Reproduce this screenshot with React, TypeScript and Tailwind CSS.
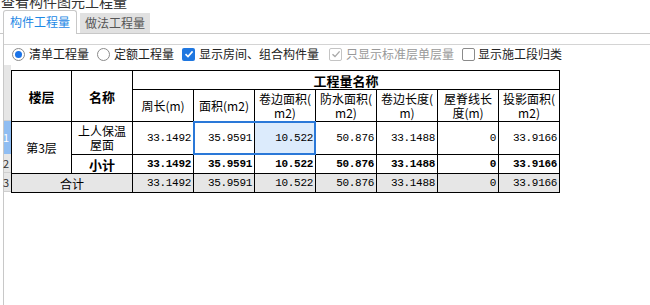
import { ReactNode } from "react";

const cjk = "font-['Noto_Sans_CJK_SC','Noto_Sans',sans-serif]";
const mono = "font-['Liberation_Mono','Noto_Sans_CJK_SC',monospace] text-[11px] tracking-[-0.3px]";

// 数值列
const headers: ReactNode[] = [
  "周长(m)",
  "面积(m2)",
  <>卷边面积(<br />m2)</>,
  <>防水面积(<br />m2)</>,
  <>卷边长度(<br />m)</>,
  <>屋脊线长<br />度(m)</>,
  <>投影面积(<br />m2)</>,
];

const values = ["33.1492", "35.9591", "10.522", "50.876", "33.1488", "0", "33.9166"];

const Radio = ({ checked }: { checked?: boolean }) => (
  <span className="w-[13px] h-[13px] rounded-full border border-[#8a8a8a] bg-white flex items-center justify-center">
    {checked && <span className="w-[7px] h-[7px] rounded-full bg-[#1a73e8]" />}
  </span>
);

const Check = ({ state }: { state: "on" | "off" | "disabled" }) => {
  if (state === "on")
    return (
      <span className="w-[13px] h-[13px] rounded-[2px] bg-[#1f77e0] flex items-center justify-center">
        <svg width="10" height="10" viewBox="0 0 10 10">
          <path d="M1.5 5.2 L4 7.6 L8.6 2.4" fill="none" stroke="#fff" strokeWidth="1.6" />
        </svg>
      </span>
    );
  return (
    <span
      className={`w-[13px] h-[13px] rounded-[2px] border bg-white flex items-center justify-center ${
        state === "disabled" ? "border-[#c4c4c4]" : "border-[#8a8a8a]"
      }`}
    >
      {state === "disabled" && (
        <svg width="10" height="10" viewBox="0 0 10 10">
          <path d="M1.5 5.2 L4 7.6 L8.6 2.4" fill="none" stroke="#a8a8a8" strokeWidth="1.4" />
        </svg>
      )}
    </span>
  );
};

const td = "border border-black px-[2px] text-right";

export default function App() {
  return (
    <div className={`w-[650px] h-[305px] bg-white overflow-hidden text-black ${cjk}`}>
      {/* 标题，顶部被截掉 */}
      <div className="h-[11px] overflow-hidden">
        <div className="-mt-[8px] pl-[1px] text-[14px] leading-[18px] text-[#333]">查看构件图元工程量</div>
      </div>

      {/* 页签 */}
      <div className="flex items-end h-[23px] pl-[3px] border-b border-[#c8c8c8]">
        <div className="h-[24px] -mb-px px-[6px] border border-b-0 border-[#c8c8c8] rounded-t-[3px] bg-white text-[12px] leading-[22px] text-[#1e88e5]">
          构件工程量
        </div>
        <div className="ml-[3px] h-[20px] px-[5px] bg-[#e1e1e1] text-[12px] leading-[20px] text-[#555]">做法工程量</div>
      </div>

      <div className="ml-[3px] border-l border-[#c8c8c8] h-[271px]">
        <div className="h-[11px] border-b border-[#d4d4d4]" />

        {/* 选项 */}
        <div className="flex items-center h-[18px] pl-[8px] text-[12px] leading-[16px] text-[#222]">
          <Radio checked />
          <span className="ml-[4px]">清单工程量</span>
          <span className="ml-[8px]"><Radio /></span>
          <span className="ml-[4px]">定额工程量</span>
          <span className="ml-[8px]"><Check state="on" /></span>
          <span className="ml-[4px]">显示房间、组合构件量</span>
          <span className="ml-[10px]"><Check state="disabled" /></span>
          <span className="ml-[4px] text-[#999]">只显示标准层单层量</span>
          <span className="ml-[8px]"><Check state="off" /></span>
          <span className="ml-[3px]">显示施工段归类</span>
        </div>

        {/* 表格 */}
        <div className="flex mt-[2px]">
          <div className="w-[7px] flex flex-col text-[11px] leading-none">
            <div className="h-[5px] bg-[#e6e6e6]" />
            <div className="h-[51px] bg-[#e6e6e6] border-b border-[#cfcfcf]" />
            <div className="h-[33px] bg-[#8fbdf2] text-white flex items-center -indent-[1px]">1</div>
            <div className="h-[19px] bg-[#e6e6e6] border-b border-[#cfcfcf] flex items-center -indent-[1px] text-[#333]">2</div>
            <div className="h-[19px] bg-[#e6e6e6] border-b border-[#cfcfcf] flex items-center -indent-[1px] text-[#333]">3</div>
          </div>
          <div className="relative mt-[5px]">
            <table className="border-collapse table-fixed w-[549px] text-[12px] leading-[15px]">
              <colgroup>
                <col className="w-[60px]" />
                <col className="w-[61px]" />
                {headers.map((_, i) => (
                  <col key={i} className="w-[61px]" />
                ))}
              </colgroup>
              <tbody>
                <tr className="h-[19px]">
                  <td rowSpan={2} className="border border-black text-center font-bold text-[13px]">楼层</td>
                  <td rowSpan={2} className="border border-black text-center font-bold text-[13px]">名称</td>
                  <td colSpan={7} className="border border-black text-center font-bold text-[13px] leading-[17px]">
                    工程量名称
                  </td>
                </tr>
                <tr className="h-[32px]">
                  {headers.map((h, i) => (
                    <td key={i} className="border border-black text-center align-middle leading-[14px] whitespace-nowrap">
                      {h}
                    </td>
                  ))}
                </tr>
                <tr className="h-[33px]">
                  <td rowSpan={2} className="border border-black text-center">第3层</td>
                  <td className="border border-black text-center leading-[14px]">
                    上人保温
                    <br />
                    屋面
                  </td>
                  {values.map((v, i) => (
                    <td key={i} className={`${td} ${mono} ${i === 2 ? "bg-[#dcebfc]" : ""}`}>
                      {v}
                    </td>
                  ))}
                </tr>
                <tr className="h-[19px]">
                  <td className="border border-black text-center font-bold text-[13px]">小计</td>
                  {values.map((v, i) => (
                    <td key={i} className={`${td} ${mono} font-bold`}>
                      {v}
                    </td>
                  ))}
                </tr>
                <tr className="h-[19px] bg-[#e6e6e6]">
                  <td colSpan={2} className="border border-black text-center">合计</td>
                  {values.map((v, i) => (
                    <td key={i} className={`${td} ${mono}`}>
                      {v}
                    </td>
                  ))}
                </tr>
              </tbody>
            </table>
            {/* 选中单元格的蓝色框 */}
            <div className="absolute left-[182px] top-[51px] w-[123px] h-[34px] border-2 border-[#2a78d8] pointer-events-none" />
          </div>
        </div>
      </div>
    </div>
  );
}
